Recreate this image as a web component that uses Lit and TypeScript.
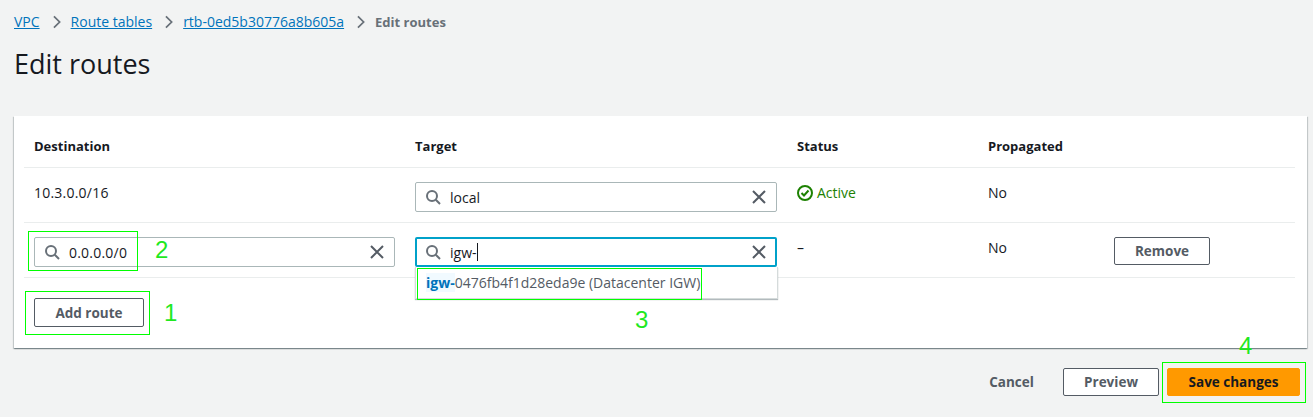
import { LitElement, html, css } from "lit";
import { customElement } from "lit/decorators.js";

const search = html`<svg class="ic" viewBox="0 0 16 16" width="16" height="16"><circle cx="7" cy="7" r="5" fill="none" stroke="currentColor" stroke-width="2"/><path d="M10.8 10.8 15 15" fill="none" stroke="currentColor" stroke-width="2"/></svg>`;
const clear = html`<svg class="x" viewBox="0 0 16 16" width="16" height="16"><path d="M2 2l12 12M14 2 2 14" fill="none" stroke="currentColor" stroke-width="2"/></svg>`;
const chev = html`<svg class="chev" viewBox="0 0 16 16" width="16" height="16"><path d="M4.5 1.5 11 8l-6.5 6.5" fill="none" stroke="currentColor" stroke-width="2"/></svg>`;

@customElement("app-root")
export class AppRoot extends LitElement {
  static styles = css`
    :host { display: block; width: 1313px; height: 417px; background: #f2f3f3; font-family: "Open Sans", "Noto Sans", sans-serif; font-size: 14px; color: #16191f; position: relative; overflow: hidden; }
    .crumbs { display: flex; align-items: center; padding: 11px 0 0 14px; height: 22px; }
    .crumbs a { color: #0073bb; text-decoration: underline; font-size: 14px; line-height: 20px; }
    .chev { color: #687078; margin: 0 7px 0 10px; width: 14px; }
    .cur { color: #687078; font-weight: 700; font-size: 13px; line-height: 20px; }
    h1 { margin: 0; padding: 13px 0 0 14px; font-size: 27px; line-height: 36px; font-weight: 400; height: 35px; }
    .card { margin: 35px 6px 0 14px; height: 232px; box-sizing: border-box; background: #fff; padding: 9px 12px 0 10px; box-shadow: 0 1px 1px 0 rgba(0,28,36,.3), 1px 1px 1px 0 rgba(0,28,36,.15), -1px 1px 1px 0 rgba(0,28,36,.15); }
    .row { display: grid; grid-template-columns: 381px 382px 191px 126px 1fr; padding-left: 10px; border-bottom: 1px solid #eaeded; box-sizing: border-box; }
    .head { height: 43px; align-items: center; font-weight: 700; font-size: 13px; color: #16191f; padding-bottom: 1px; }
    .r1 { height: 55px; }
    .r2 { height: 55px; }
    .cell { padding-top: 14px; font-size: 14px; line-height: 22px; color: #16191f; }
    .ok { color: #1d8102; display: flex; align-items: flex-start; gap: 4px; }
    .okic { margin-top: 3px; }
    .digits { letter-spacing: .22px; }
    .in { display: flex; align-items: center; box-sizing: border-box; width: 362px; height: 30px; margin-top: 14px; border: 1px solid #aab7b8; border-radius: 2px; padding: 0 9px 0 9px; background: #fff; font-size: 14px; color: #16191f; }
    .in.d { width: 361px; }
    .ic { color: #687078; flex: none; margin-right: 9px; }
    .x { color: #545b64; flex: none; margin-left: auto; }
    .focus { border: 2px solid #00a1c9; padding: 0 8px; }
    .caret { display: inline-block; width: 1px; height: 18px; background: #16191f; }
    .btn { box-sizing: border-box; display: flex; align-items: center; justify-content: center; height: 28px; border: 1px solid #545b64; border-radius: 2px; background: #fff; color: #545b64; font-weight: 700; font-size: 13.5px; font-family: inherit; padding: 0; }
    .rm { width: 96px; margin-top: 14px; }
    .add { width: 110px; height: 29px; margin: 20px 0 0 10px; }
    .foot { display: flex; justify-content: flex-end; align-items: center; padding: 20px 13px 0 0; }
    .cancel { border: none; background: none; width: 79px; margin-right: 12px; }
    .preview { width: 96px; margin-right: 8px; }
    .save { width: 133px; background: #ff9900; border-color: #ff9900; color: #16191f; }
    .dd { position: absolute; left: 415px; top: 267px; width: 363px; height: 32px; box-sizing: border-box; background: #fff; border: 1px solid #d5dbdb; border-top: none; box-shadow: 0 1px 1px rgba(0,28,36,.3); padding: 5px 0 0 10px; font-size: 14px; line-height: 22px; color: #545b64; white-space: nowrap; }
    .dd b { color: #0073bb; background: #f1faff; font-weight: 700; }
    .box { position: absolute; box-sizing: border-box; border: 1px solid #00ff00; pointer-events: none; }
    .num { position: absolute; color: #1fe81f; font-size: 24px; line-height: 24px; font-family: "Liberation Sans", sans-serif; }
    .b2 { left: 28px; top: 231px; width: 110px; height: 40px; }
    .b1 { left: 25px; top: 291px; width: 125px; height: 44px; }
    .b3 { left: 417px; top: 268px; width: 285px; height: 32px; }
    .b4 { left: 1162px; top: 362px; width: 144px; height: 41px; }
    .n2 { left: 155px; top: 238px; }
    .n1 { left: 164px; top: 301px; }
    .n3 { left: 635px; top: 308px; }
    .n4 { left: 1239px; top: 334px; }
  `;

  render() {
    return html`
      <nav class="crumbs">
        <a>VPC</a>${chev}<a>Route tables</a>${chev}<a>rtb-0ed5b30776a8b605a</a>${chev}<span class="cur">Edit routes</span>
      </nav>
      <h1>Edit routes</h1>
      <section class="card">
        <div class="row head"><span>Destination</span><span>Target</span><span>Status</span><span>Propagated</span><span></span></div>
        <div class="row r1">
          <div class="cell digits">10.3.0.0/16</div>
          <div><div class="in">${search}<span>local</span>${clear}</div></div>
          <div class="cell ok">
            <svg class="okic" viewBox="0 0 16 16" width="16" height="16"><circle cx="8" cy="8" r="7" fill="none" stroke="currentColor" stroke-width="2"/><path d="M4.5 8l2.5 2.5 4.5-5" fill="none" stroke="currentColor" stroke-width="2"/></svg>
            <span>Active</span>
          </div>
          <div class="cell">No</div><div></div>
        </div>
        <div class="row r2">
          <div><div class="in d">${search}<span class="digits">0.0.0.0/0</span>${clear}</div></div>
          <div><div class="in focus">${search}<span>igw-</span><span class="caret"></span>${clear}</div></div>
          <div class="cell">–</div>
          <div class="cell">No</div>
          <div><button class="btn rm">Remove</button></div>
        </div>
        <button class="btn add">Add route</button>
      </section>
      <footer class="foot">
        <button class="btn cancel">Cancel</button>
        <button class="btn preview">Preview</button>
        <button class="btn save">Save changes</button>
      </footer>
      <div class="dd"><b>igw-</b>0476fb4f1d28eda9e (Datacenter IGW)</div>
      <div class="box b2"></div>
      <div class="box b1"></div>
      <div class="box b3"></div>
      <div class="box b4"></div>
      <span class="num n2">2</span>
      <span class="num n1">1</span>
      <span class="num n3">3</span>
      <span class="num n4">4</span>
    `;
  }
}
